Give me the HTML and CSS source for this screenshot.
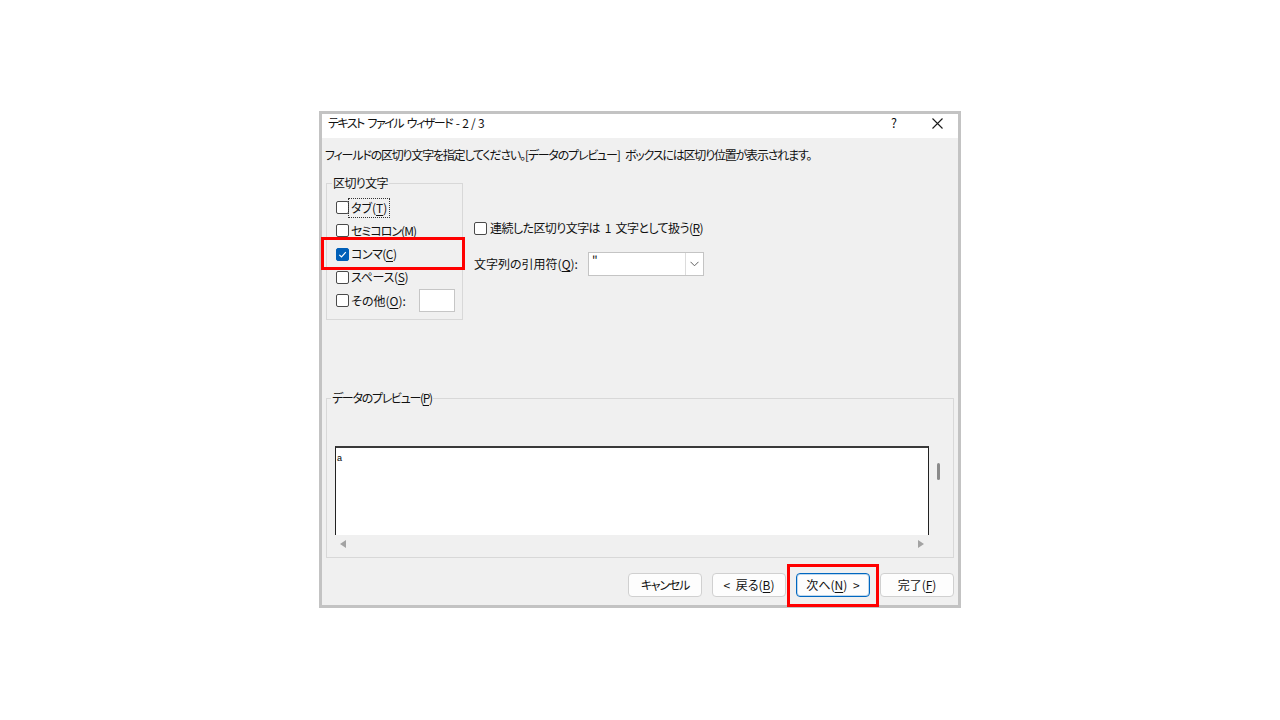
FILE: index.html
```html
<!DOCTYPE html>
<html lang="ja">
<head>
<meta charset="utf-8">
<title>テキスト ファイル ウィザード</title>
<link rel="stylesheet" href="styles.css">
</head>
<body>
<div class="dialog">
  <div class="titlebar">
    <span class="title">テキスト ファイル ウィザード - 2 / 3</span>
    <span class="tb-help">?</span>
    <span class="tb-close"><svg width="11" height="11" viewBox="0 0 11 11"><path d="M0.5 0.5 L10.5 10.5 M10.5 0.5 L0.5 10.5" stroke="#1a1a1a" stroke-width="1.1" fill="none"/></svg></span>
  </div>
  <div class="content">
    <p class="instr">フィールドの区切り文字を指定してください。[データのプレビュー] ボックスには区切り位置が表示されます。</p>
    <div class="top-row">
      <fieldset class="group delims">
        <legend class="lg-delims">区切り文字</legend>
        <div class="chk-row"><span class="box"></span><span class="lbl focus">タブ(<u>T</u>)</span></div>
        <div class="chk-row"><span class="box"></span><span class="lbl ls-semi">セミコロン(<u>M</u>)</span></div>
        <div class="chk-row"><span class="box checked"><svg width="9" height="9" viewBox="0 0 9 9"><path d="M1.3 4.8 L3.5 7 L7.8 2.2" stroke="#fff" stroke-width="1.2" fill="none"/></svg></span><span class="lbl ls-comma">コンマ(<u>C</u>)</span></div>
        <div class="chk-row"><span class="box"></span><span class="lbl ls-space">スペース(<u>S</u>)</span></div>
        <div class="chk-row"><span class="box"></span><span class="lbl">その他(<u>O</u>):</span><span class="other-input"></span></div>
      </fieldset>
      <div class="options">
        <div class="chk-row"><span class="box"></span><span class="lbl ls-consec">連続した区切り文字は 1 文字として扱う(<u>R</u>)</span></div>
        <div class="quote-row">
          <span class="quote-label">文字列の引用符(<u>Q</u>):</span>
          <div class="combo">
            <span class="combo-val">"</span>
            <span class="combo-btn"><svg width="9" height="6" viewBox="0 0 9 6"><path d="M0.5 0.8 L4.5 4.8 L8.5 0.8" stroke="#606060" stroke-width="1" fill="none"/></svg></span>
          </div>
        </div>
      </div>
    </div>
    <fieldset class="group preview-group">
      <legend class="lg-preview">データのプレビュー(<u>P</u>)</legend>
      <div class="preview">
        <div class="pv-data">a</div>
        <div class="pv-vscroll"><span class="thumb"></span></div>
        <div class="pv-hscroll">
          <svg width="6" height="8" viewBox="0 0 6 8"><path d="M6 0 L0 4 L6 8 Z" fill="#a3a3a3"/></svg>
          <svg width="6" height="8" viewBox="0 0 6 8"><path d="M0 0 L6 4 L0 8 Z" fill="#a3a3a3"/></svg>
        </div>
        <div class="pv-corner"></div>
      </div>
    </fieldset>
    <div class="buttons">
      <span class="btn ls-cancel">キャンセル</span>
      <span class="btn">&lt; 戻る(<u>B</u>)</span>
      <span class="btn default">次へ(<u>N</u>) &gt;</span>
      <span class="btn">完了(<u>F</u>)</span>
    </div>
  </div>
  <div class="mark mark-comma"></div>
  <div class="mark mark-next"></div>
</div>
</body>
</html>
```

FILE: styles.css
```css
* { box-sizing: border-box; }
html, body { margin: 0; height: 720px; }
body {
  background: #fff;
  font-family: "Noto Sans CJK JP", "Noto Sans", sans-serif;
  font-size: 12px;
  color: #111;
  font-feature-settings: "palt";
  padding-top: 111px;
  display: flex;
  justify-content: center;
  align-items: flex-start;
}
u { text-decoration-thickness: 1px; text-underline-offset: 2px; }

.dialog {
  position: relative;
  width: 642px;
  height: 497px;
  border: 3px solid #c3c3c3;
  background: #f0f0f0;
  display: flex;
  flex-direction: column;
}
.titlebar {
  height: 24px;
  background: #fff;
  display: flex;
  align-items: flex-start;
  padding: 1px 0 0 6px;
  flex: none;
}
.title { flex: 1; line-height: 16px; letter-spacing: -1.5px; word-spacing: 2.5px; }
.tb-help { width: 44px; text-align: center; line-height: 16px; font-size: 12.5px; }
.tb-close { width: 42px; height: 16px; display: flex; justify-content: center; align-items: center; }

.content {
  flex: 1;
  padding: 0 4px 8px;
  display: flex;
  flex-direction: column;
}
.instr { margin: 9px 0 0 -1px; line-height: 16px; letter-spacing: -1.2px; word-spacing: 4px; }

.top-row { display: flex; align-items: flex-start; margin-top: 12px; }

.group { margin: 0; border: 1px solid #d8d8d8; min-width: 0; }
.group legend { padding: 0 1px; margin-left: -4px; line-height: 16px; }
.lg-delims { letter-spacing: -0.6px; }
.lg-preview { letter-spacing: -1.3px; }

.delims { width: 137px; padding: 5px 0 7px 9px; }
.chk-row { display: flex; align-items: center; height: 23.25px; }
.box {
  width: 13px; height: 13px;
  border: 1px solid #4a4a4a;
  border-radius: 2px;
  background: #fff;
  flex: none;
  display: flex; align-items: center; justify-content: center;
}
.box.checked { background: #005fb8; border-color: #005fb8; }
.lbl { padding-left: 2px; line-height: 16px; }
.focus { outline: 1px dotted #333; padding: 1px 2px 1px 2px; }
.ls-semi { letter-spacing: -1px; }
.ls-comma { letter-spacing: -0.5px; }
.ls-space { letter-spacing: -0.3px; }
.ls-consec { letter-spacing: -0.55px; word-spacing: 2.5px; }
.other-input {
  width: 36px; height: 23px;
  margin-left: auto; margin-right: 7px;
  background: #fff;
  border: 1px solid #c6c6c6;
}

.options { margin-left: 11px; padding-top: 41.5px; }
.options .chk-row .lbl { padding-left: 3px; }
.quote-row { display: flex; align-items: center; margin-top: 12.5px; }
.quote-label { width: 114px; line-height: 16px; }
.combo {
  width: 116px; height: 24px;
  display: flex;
  background: #fff;
  border: 1px solid #c4c4c4;
}
.combo-val { flex: 1; padding: 0 3px; line-height: 16px; }
.combo-btn {
  width: 18px;
  border-left: 1px solid #dcdcdc;
  display: flex; align-items: center; justify-content: center;
}

.preview-group { margin-top: 70px; padding: 40px 0 4px 8px; }
.preview {
  display: grid;
  grid-template-columns: 1fr 24px;
  grid-template-rows: 89px 18px;
}
.pv-data {
  background: #fff;
  border-left: 1px solid #222;
  border-right: 1px solid #222;
  border-top: 2px solid #3a3a3a;
  padding: 5px 0 0 1px;
  font-family: "Liberation Sans", sans-serif;
  font-size: 9px;
  line-height: 10px;
  color: #000;
}
.pv-vscroll { padding: 17px 0 0 8px; }
.thumb { display: block; width: 3px; height: 17px; background: #8a8a8a; border-radius: 2px; }
.pv-hscroll {
  display: flex;
  justify-content: space-between;
  align-items: center;
  padding: 0 5px;
}

.buttons { display: flex; justify-content: flex-end; gap: 10px; margin-top: 15px; }
.btn {
  width: 74px; height: 24px;
  display: flex; align-items: center; justify-content: center;
  background: #fdfdfd;
  border: 1px solid #d0d0d0;
  border-radius: 4px;
  line-height: 16px;
  word-spacing: 3px;
}
.ls-cancel { letter-spacing: -1.2px; }
.btn.default { border-color: #0067c0; box-shadow: inset 0 0 0 1px rgba(0,103,192,0.25); }

.mark { position: absolute; border: 3px solid #ff0000; }
.mark-comma { left: -1px; top: 123px; width: 144px; height: 33px; }
.mark-next { left: 465px; top: 450px; width: 92px; height: 43px; }
```
